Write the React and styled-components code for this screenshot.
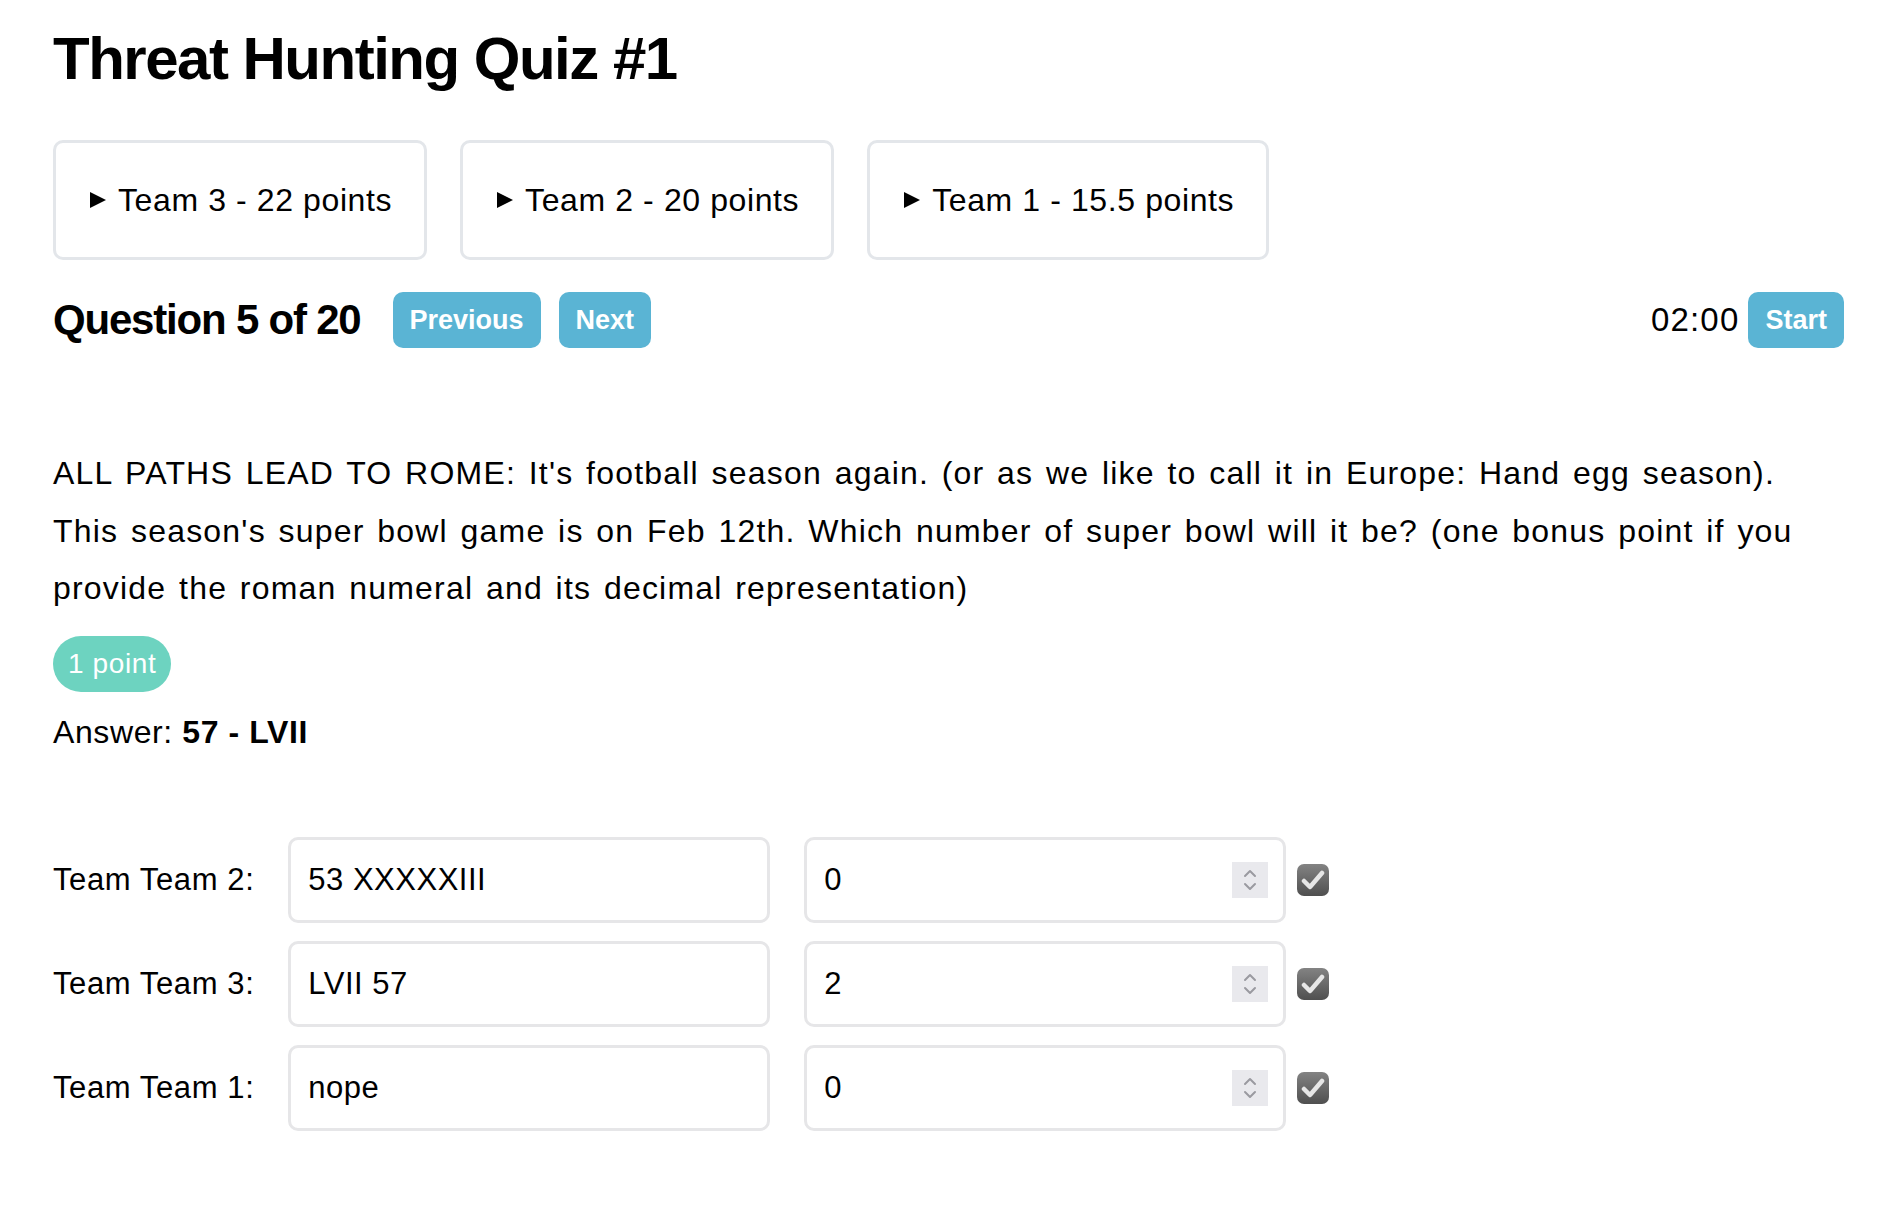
import React, { useState } from 'react'
import styled, { createGlobalStyle } from 'styled-components'

const GlobalStyle = createGlobalStyle`
  body {
    margin: 0;
    background: #fff;
    color: #000;
    font-family: "Liberation Sans", Arial, sans-serif;
  }
`

const teams = [
  { name: 'Team 3', points: 22 },
  { name: 'Team 2', points: 20 },
  { name: 'Team 1', points: 15.5 },
]

const answers = [
  { team: 'Team 2', text: '53 XXXXXIII', score: 0 },
  { team: 'Team 3', text: 'LVII 57', score: 2 },
  { team: 'Team 1', text: 'nope', score: 0 },
]

function App() {
  const [rows, setRows] = useState(answers)

  const update = (i, key, value) => {
    setRows(rows.map((r, idx) => (idx === i ? { ...r, [key]: value } : r)))
  }

  return (
    <Page>
      <GlobalStyle />
      <Title>Threat Hunting Quiz #1</Title>

      <Scoreboard>
        {teams.map(t => (
          <TeamBox key={t.name}>
            <Summary>
              {t.name} - {t.points} points
            </Summary>
          </TeamBox>
        ))}
      </Scoreboard>

      <QuestionBar>
        <QuestionTitle>Question 5 of 20</QuestionTitle>
        <Button>Previous</Button>
        <Button>Next</Button>
        <Spacer />
        <Timer>02:00</Timer>
        <Button>Start</Button>
      </QuestionBar>

      <QuestionText>
        ALL PATHS LEAD TO ROME: It's football season again. (or as we like to call it in Europe: Hand egg season).
        This season's super bowl game is on Feb 12th. Which number of super bowl will it be? (one bonus point if you
        provide the roman numeral and its decimal representation)
      </QuestionText>

      <Badge>1 point</Badge>

      <Answer>
        Answer: <b>57 - LVII</b>
      </Answer>

      <Grading>
        {rows.map((r, i) => (
          <Row key={r.team}>
            <Label>Team {r.team}:</Label>
            <Field value={r.text} onChange={e => update(i, 'text', e.target.value)} />
            <NumberWrap>
              <Field value={r.score} onChange={e => update(i, 'score', e.target.value)} />
              <Spinner>
                <svg width="16" height="26" viewBox="0 0 16 26" fill="none" stroke="#9a9aa0" strokeWidth="2" strokeLinecap="round" strokeLinejoin="round">
                  <path d="M3 9 L8 4 L13 9" />
                  <path d="M3 17 L8 22 L13 17" />
                </svg>
              </Spinner>
            </NumberWrap>
            <Check>
              <svg width="24" height="22" viewBox="0 0 24 22">
                <path d="M3 12 L9 18 L21 4" fill="none" stroke="#e6e6e6" strokeWidth="4.5" strokeLinecap="round" strokeLinejoin="round" />
              </svg>
            </Check>
          </Row>
        ))}
      </Grading>
    </Page>
  )
}

export default App

const Page = styled.div`
  padding: 23px 48px 60px 53px;
`

const Title = styled.h1`
  margin: 0;
  font-size: 60px;
  line-height: 72px;
  font-weight: 700;
  letter-spacing: -1.5px;
`

const Scoreboard = styled.div`
  display: flex;
  gap: 33px;
  margin-top: 45px;
`

const TeamBox = styled.div`
  border: 3px solid #e3e6ea;
  border-radius: 10px;
  padding: 32px 32px;
`

const Summary = styled.div`
  display: flex;
  align-items: center;
  font-size: 32px;
  line-height: 50px;
  letter-spacing: 0.6px;
  white-space: nowrap;

  &::before {
    content: '';
    width: 0;
    height: 0;
    border-top: 8px solid transparent;
    border-bottom: 8px solid transparent;
    border-left: 16px solid #000;
    margin: 0 12px 0 2px;
  }
`

const QuestionBar = styled.div`
  display: flex;
  align-items: center;
  margin-top: 32px;
  height: 56px;
`

const QuestionTitle = styled.h2`
  margin: 0 32px 0 0;
  font-size: 42px;
  line-height: 56px;
  font-weight: 700;
  letter-spacing: -1.2px;
`

const Button = styled.button`
  height: 56px;
  padding: 0 17px;
  margin-right: 18px;
  border: none;
  border-radius: 10px;
  background: #5ab4d4;
  color: #fff;
  font-family: "Liberation Sans", Arial, sans-serif;
  font-size: 27px;
  font-weight: 700;
  cursor: pointer;

  &:last-child {
    margin-right: 0;
  }
`

const Spacer = styled.div`
  flex: 1;
`

const Timer = styled.span`
  font-size: 33px;
  letter-spacing: 1.2px;
  margin-right: 9px;
`

const QuestionText = styled.p`
  margin: 97px 0 0;
  font-size: 32px;
  line-height: 57.6px;
  letter-spacing: 1.2px;
  word-spacing: 2.6px;
`

const Badge = styled.span`
  display: inline-flex;
  align-items: center;
  height: 56px;
  margin-top: 18px;
  padding: 0 15px;
  border-radius: 28px;
  background: #6dd3c0;
  color: #fff;
  font-size: 28px;
  letter-spacing: 0.6px;
`

const Answer = styled.p`
  margin: 17px 0 0;
  font-size: 32px;
  line-height: 46px;
  letter-spacing: 0.6px;
`

const Grading = styled.div`
  display: flex;
  flex-direction: column;
  gap: 18px;
  margin-top: 82px;
`

const Row = styled.div`
  display: flex;
  align-items: center;
`

const Label = styled.label`
  font-size: 31px;
  letter-spacing: 0.6px;
  margin-right: 34px;
  white-space: nowrap;
`

const Field = styled.input`
  box-sizing: border-box;
  width: 482px;
  height: 86px;
  padding: 0 17px;
  border: 3px solid #e6e6e8;
  border-radius: 10px;
  background: #fff;
  font-family: "Liberation Sans", Arial, sans-serif;
  font-size: 31px;
  letter-spacing: 0.5px;
  color: #000;
  outline: none;
`

const NumberWrap = styled.div`
  position: relative;
  margin-left: 34px;
`

const Spinner = styled.span`
  position: absolute;
  right: 18px;
  top: 25px;
  width: 36px;
  height: 36px;
  display: flex;
  align-items: center;
  justify-content: center;
  background: #e9e9ed;
`

const Check = styled.span`
  margin-left: 11px;
  width: 32px;
  height: 32px;
  border-radius: 7px;
  background: linear-gradient(#838383, #4f4f4f);
  display: flex;
  align-items: center;
  justify-content: center;
`
